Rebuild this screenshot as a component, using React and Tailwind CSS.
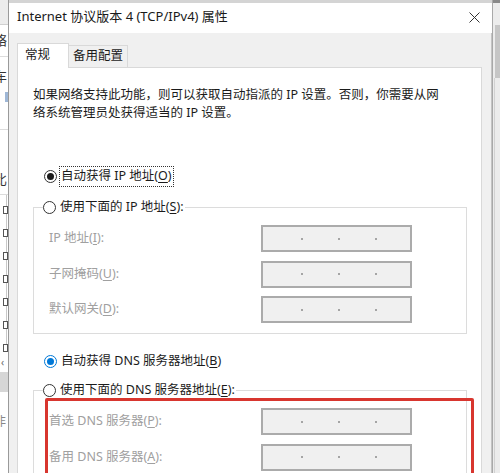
import React from 'react';

const FONT = { fontFamily: '"Noto Sans", "Noto Sans CJK SC", sans-serif' };

// Win10 style radio button
function Radio({ checked, blue }) {
  return (
    <span
      className={`w-[13px] h-[13px] rounded-full border bg-white flex items-center justify-center shrink-0 ${
        blue ? 'border-[#0078d7]' : 'border-[#333333]'
      }`}
    >
      {checked && (
        <span className={`w-[7px] h-[7px] rounded-full ${blue ? 'bg-[#0078d7]' : 'bg-[#1a1a1a]'}`} />
      )}
    </span>
  );
}

function Key({ children }) {
  return <span className="underline underline-offset-2">{children}</span>;
}

function IpBox() {
  return (
    <div className="w-[151px] h-[27px] bg-[#f0f0f0] border-2 border-[#ababab] flex items-center pl-[38px] gap-[35px]">
      <span className="w-[2px] h-[2px] rounded-full bg-[#8c8c8c]" />
      <span className="w-[2px] h-[2px] rounded-full bg-[#8c8c8c]" />
      <span className="w-[2px] h-[2px] rounded-full bg-[#8c8c8c]" />
    </div>
  );
}

function FieldRow({ label }) {
  return (
    <div className="flex items-center h-[27px]">
      <span className="w-[212px] ml-[15px] text-[#a0a0a0]">{label}</span>
      <IpBox />
    </div>
  );
}

// sliver of the window behind the dialog (left side)
function LeftStrip() {
  const boxes = [0, 1, 2, 3, 4, 5, 6];
  return (
    <div className="w-[8px] h-full bg-white flex flex-col overflow-hidden text-[13px] text-[#333]">
      <div className="h-[25px] bg-[#ececec] border-b border-[#d0d0d0]" />
      <div className="h-[32px] border-b border-[#dcdcdc] flex items-center">
        <span className="-ml-[6px]">络</span>
      </div>
      <div className="h-[73px] border-b border-[#dcdcdc] flex flex-col">
        <span className="-ml-[6px] mt-[10px]">车</span>
        <span className="ml-[5px] mt-[5px] w-[3px] h-[10px] bg-[#9fb7d6]" />
      </div>
      <div className="h-[65px] border-b border-[#dcdcdc] flex items-end pb-[5px]">
        <span className="-ml-[6px]">比</span>
      </div>
      <div className="flex flex-col gap-[15px] pt-[11px] border-r border-[#c8c8c8] w-[7px]">
        {boxes.map(i => (
          <span key={i} className="ml-[3px] w-[5px] h-[8px] border border-[#555] bg-white" />
        ))}
      </div>
      <div className="h-[20px] text-[10px] text-[#666] flex items-center pl-[1px]">‹</div>
      <div className="h-[20px] bg-[#d6d6d6]" />
      <div className="h-[60px] flex items-center">
        <span className="-ml-[6px] text-[#888] text-[12px]">非</span>
      </div>
    </div>
  );
}

function RightStrip() {
  return (
    <div className="w-[8px] h-full bg-[#ececec] border-l border-[#a9a9a9] flex flex-col">
      <div className="h-[3px] bg-[#8a8a8a]" />
      <div className="h-[22px]" />
      <div className="ml-[2px] h-[53px] bg-[#c6c6c6]" />
      <div className="flex-1 ml-[1px] border-l border-[#d2d2d2]" />
    </div>
  );
}

export default function App() {
  return (
    <div className="w-[500px] h-[473px] overflow-hidden flex bg-[#f0f0f0] text-[12.5px] text-[#1b1b1b]" style={FONT}>
      <LeftStrip />

      {/* DIALOG */}
      <div className="w-[484px] h-full flex flex-col border-l border-[#9a9a9a] bg-[#f0f0f0]">
        <div className="h-[3px] bg-[#d4d4d4] shrink-0" />
        {/* Title bar */}
        <div className="h-[30px] bg-white flex items-center justify-between pl-[8px] pr-[10px] shrink-0">
          <span className="text-[13px] text-[#1a1a1a] -mt-[2px]">Internet 协议版本 4 (TCP/IPv4) 属性</span>
          <svg width="11" height="11" viewBox="0 0 11 11" className="mr-[2px] -mt-[2px]">
            <path d="M0.5 0.5 L10.5 10.5 M10.5 0.5 L0.5 10.5" stroke="#333" strokeWidth="1" />
          </svg>
        </div>

        {/* Body */}
        <div className="flex-1 flex flex-col pl-[8px] pr-[9px] pt-[10px] border-r border-[#c4c4c4]">
          {/* Tabs */}
          <div className="flex items-end h-[24px]">
            <div className="relative z-10 -mb-px w-[52px] h-[25px] bg-white border border-b-0 border-[#d9d9d9] flex items-center pl-[7px] pb-[1px]">
              常规
            </div>
            <div className="w-[59px] h-[22px] bg-[#f0f0f0] border border-l-0 border-b-0 border-[#d9d9d9] flex items-center justify-center">
              备用配置
            </div>
          </div>

          {/* Panel */}
          <div className="relative flex-1 bg-white border border-[#d9d9d9] flex flex-col">
            <p className="mt-[18px] ml-[15px] leading-[18px]">
              如果网络支持此功能，则可以获取自动指派的 IP 设置。否则，你需要从网
              <br />
              络系统管理员处获得适当的 IP 设置。
            </p>

            <div className="mt-[44px] ml-[26px] h-[21px] flex items-center">
              <Radio checked />
              <span className="ml-[2px] px-[1px] border border-dotted border-[#333]">
                自动获得 IP 地址(<Key>O</Key>)
              </span>
            </div>

            <fieldset className="mt-[10px] ml-[15px] mr-[14px] border border-[#dcdcdc] pb-[10px]">
              <legend className="ml-[9px] h-[21px] flex items-center bg-white">
                <Radio />
                <span className="ml-[4px] pr-[1px]">
                  使用下面的 IP 地址(<Key>S</Key>):
                </span>
              </legend>
              <div className="pt-[7px] flex flex-col gap-[8.5px]">
                <FieldRow label={<>IP 地址(<Key>I</Key>):</>} />
                <FieldRow label={<>子网掩码(<Key>U</Key>):</>} />
                <FieldRow label={<>默认网关(<Key>D</Key>):</>} />
              </div>
            </fieldset>

            <div className="mt-[17px] ml-[26px] h-[21px] flex items-center">
              <Radio checked blue />
              <span className="ml-[4px]">
                自动获得 DNS 服务器地址(<Key>B</Key>)
              </span>
            </div>

            <fieldset className="mt-[8px] ml-[15px] mr-[14px] border border-[#dcdcdc] pb-[10px]">
              <legend className="ml-[9px] h-[21px] flex items-center bg-white">
                <Radio />
                <span className="ml-[4px] pr-[1px]">
                  使用下面的 DNS 服务器地址(<Key>E</Key>):
                </span>
              </legend>
              <div className="pt-[7px] flex flex-col gap-[8.5px]">
                <FieldRow label={<>首选 DNS 服务器(<Key>P</Key>):</>} />
                <FieldRow label={<>备用 DNS 服务器(<Key>A</Key>):</>} />
              </div>
            </fieldset>

            {/* red annotation box */}
            <div className="absolute left-[27px] top-[330px] w-[429px] h-[120px] border-[3px] border-[#d8362f] rounded-[2px]" />
          </div>
        </div>
      </div>

      <RightStrip />
    </div>
  );
}
